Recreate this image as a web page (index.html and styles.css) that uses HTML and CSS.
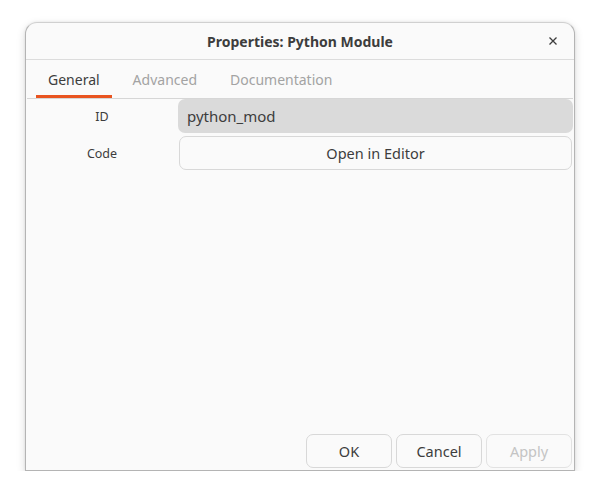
FILE: index.html
```html
<!DOCTYPE html>
<html>
<head>
<meta charset="utf-8">
<link rel="stylesheet" href="styles.css">
</head>
<body>
<div class="window">
  <div class="header">
    <div class="title">Properties: Python Module</div>
    <button class="close" aria-label="Close">
      <svg width="10" height="10" viewBox="0 0 10 10"><path d="M1.5 1.5L8.5 8.5M8.5 1.5L1.5 8.5" stroke="#3d3d3d" stroke-width="1.3" fill="none"/></svg>
    </button>
  </div>
  <div class="tabs">
    <div class="tab active">General</div>
    <div class="tab">Advanced</div>
    <div class="tab">Documentation</div>
  </div>
  <div class="content">
    <div class="form">
      <div class="label">ID</div>
      <div class="entry">python_mod</div>
      <div class="label">Code</div>
      <div class="btn wide">Open in Editor</div>
    </div>
  </div>
  <div class="actions">
    <div class="btn">OK</div>
    <div class="btn">Cancel</div>
    <div class="btn disabled">Apply</div>
  </div>
</div>
</body>
</html>
```
FILE: styles.css
```css
* { box-sizing: border-box; }
html, body { margin: 0; padding: 0; background: #ffffff; }
body {
  font-family: "Noto Sans", "DejaVu Sans", sans-serif;
  color: #3d3d3d;
  padding: 22px 0 0 25px;
}
.window {
  width: 550px;
  height: 449px;
  background: #fafafa;
  border: 1px solid #b4b4b4;
  border-top-color: #d0d0d0;
  border-radius: 12px 12px 0 0;
  box-shadow: 0 3px 10px rgba(0,0,0,0.14), 0 0 3px rgba(0,0,0,0.08);
  display: flex;
  flex-direction: column;
}
.header {
  height: 37px;
  flex: none;
  border-bottom: 1px solid #dcdcdc;
  display: flex;
  align-items: center;
  justify-content: center;
  position: relative;
}
.title {
  font-weight: bold;
  font-size: 14px;
  color: #3d3d3d;
}
.close {
  position: absolute;
  right: 13px;
  top: 10px;
  width: 16px;
  height: 16px;
  border: none;
  background: none;
  padding: 0;
  display: flex;
  align-items: center;
  justify-content: center;
}
.tabs {
  flex: none;
  height: 39px;
  margin: 0 1px 0 1px;
  border-bottom: 1px solid #d6d6d6;
  display: flex;
  gap: 9px;
  padding-left: 9px;
}
.tab {
  padding: 10px 12px 0;
  font-size: 14px;
  color: #a3a3a3;
  border-bottom: 3px solid transparent;
}
.tab.active {
  color: #3d3d3d;
  border-bottom-color: #e95420;
}
.content {
  flex: 1;
  padding: 0 1px 0 0;
}
.form {
  display: grid;
  grid-template-columns: 152px 1fr;
  row-gap: 3px;
  align-items: center;
}
.label {
  text-align: center;
  font-size: 12.5px;
  color: #3d3d3d;
}
.entry {
  height: 34px;
  background: #dadada;
  border-radius: 7px;
  padding: 0 9px;
  display: flex;
  align-items: center;
  font-size: 15px;
  color: #3d3d3d;
}
.btn {
  height: 34px;
  border: 1px solid #d8d8d8;
  border-radius: 7px;
  background: #fafafa;
  display: flex;
  align-items: center;
  justify-content: center;
  font-size: 14.5px;
  color: #3d3d3d;
}
.btn.wide { margin-left: 1px; margin-right: 1px; }
.actions {
  flex: none;
  display: flex;
  justify-content: flex-end;
  gap: 4px;
  padding: 0 2px 2px 0;
}
.actions .btn { width: 86px; }
.btn.disabled { color: #c4c4c4; border-color: #e2e2e2; }
```
